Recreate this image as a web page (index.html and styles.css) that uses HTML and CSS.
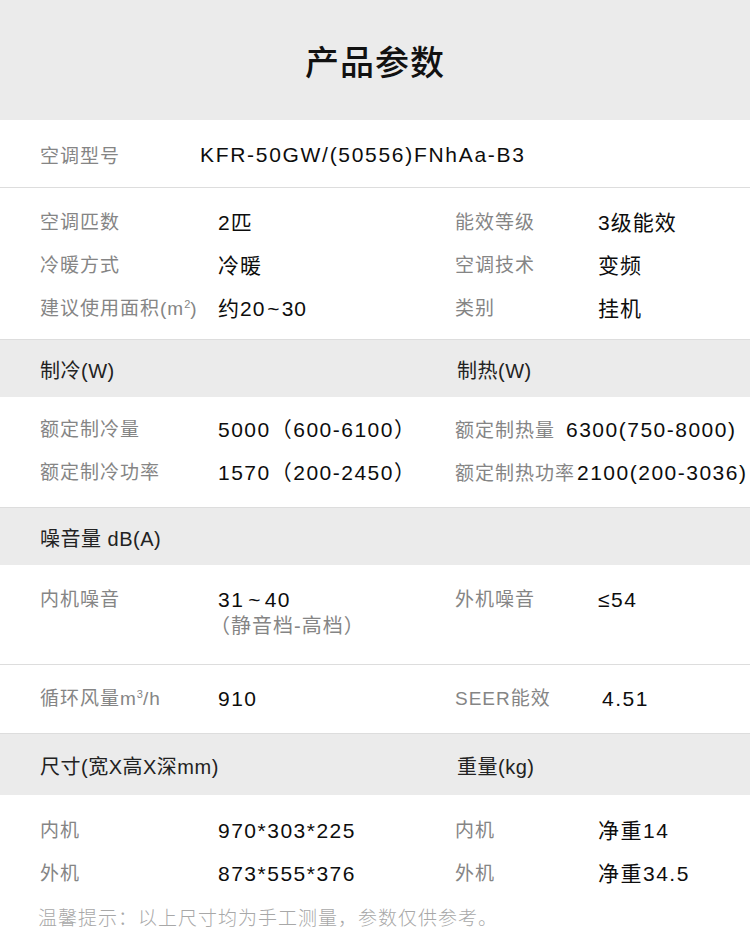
FILE: index.html
```html
<!DOCTYPE html>
<html lang="zh-CN">
<head>
<meta charset="utf-8">
<title>产品参数</title>
<link rel="stylesheet" href="styles.css">
</head>
<body>
<div class="page">
  <header class="title-bar"><h1>产品参数</h1></header>

  <section class="block model">
    <div class="row model-row">
      <span class="label">空调型号</span>
      <span class="value">KFR-50GW/(50556)FNhAa-B3</span>
    </div>
  </section>

  <section class="block basic">
    <div class="row">
      <span class="label">空调匹数</span><span class="value">2匹</span>
      <span class="label">能效等级</span><span class="value">3级能效</span>
    </div>
    <div class="row">
      <span class="label">冷暖方式</span><span class="value">冷暖</span>
      <span class="label">空调技术</span><span class="value">变频</span>
    </div>
    <div class="row">
      <span class="label">建议使用面积(m<sup>2</sup>)</span><span class="value">约20<span class="tilde">~</span>30</span>
      <span class="label">类别</span><span class="value">挂机</span>
    </div>
  </section>

  <div class="band"><span>制冷(W)</span><span>制热(W)</span></div>

  <section class="block power">
    <div class="row">
      <span class="label">额定制冷量</span><span class="value">5000（600-6100）</span>
      <span class="pair"><span class="label">额定制热量</span><span class="value gap-l">6300(750-8000)</span></span>
    </div>
    <div class="row">
      <span class="label">额定制冷功率</span><span class="value">1570（200-2450）</span>
      <span class="pair"><span class="label">额定制热功率</span><span class="value gap-s">2100(200-3036)</span></span>
    </div>
  </section>

  <div class="band"><span>噪音量 dB(A)</span></div>

  <section class="block noise">
    <div class="row">
      <span class="label">内机噪音</span>
      <span class="value">31<span class="tilde wide">~</span>40<br><span class="sub">（静音档-高档）</span></span>
      <span class="label">外机噪音</span><span class="value">≤54</span>
    </div>
  </section>

  <section class="block air">
    <div class="row">
      <span class="label">循环风量m<sup>3</sup>/h</span><span class="value">910</span>
      <span class="label">SEER能效</span><span class="value seer">4.51</span>
    </div>
  </section>

  <div class="band"><span>尺寸(宽X高X深mm)</span><span>重量(kg)</span></div>

  <section class="block size">
    <div class="row">
      <span class="label">内机</span><span class="value">970*303*225</span>
      <span class="label">内机</span><span class="value">净重14</span>
    </div>
    <div class="row">
      <span class="label">外机</span><span class="value">873*555*376</span>
      <span class="label">外机</span><span class="value">净重34.5</span>
    </div>
  </section>

  <p class="note">温馨提示：以上尺寸均为手工测量，参数仅供参考。</p>
</div>
</body>
</html>
```

FILE: styles.css
```css
* { box-sizing: border-box; }

html, body {
  margin: 0;
  padding: 0;
  background: #ffffff;
}

body {
  font-family: "Liberation Sans", "Noto Sans CJK SC", sans-serif;
  color: #111111;
}

.page {
  width: 750px;
  min-height: 946px;
  background: #ffffff;
}

.title-bar {
  height: 120px;
  background: #ebebeb;
  display: flex;
  align-items: center;
  justify-content: center;
}

.title-bar h1 {
  margin: 0;
  font-size: 34px;
  font-weight: 500;
  letter-spacing: 1px;
  color: #111111;
  font-family: "Noto Sans CJK SC", sans-serif;
}

.block {
  border-bottom: 1px solid #dddddd;
}

.row {
  display: grid;
  grid-template-columns: 178px 237px 143px 1fr;
  padding-left: 40px;
  align-items: start;
  white-space: nowrap;
}

.label {
  font-size: 19px;
  letter-spacing: 1px;
  color: #858585;
}

.label sup {
  font-size: 11px;
  vertical-align: 7px;
  line-height: 0;
  letter-spacing: 0;
}

.value {
  font-size: 21px;
  letter-spacing: 1.5px;
  color: #0d0d0d;
}

.tilde {
  letter-spacing: 0;
  margin: 0 2px;
}

.tilde.wide {
  margin: 0 4px;
}

.model .model-row {
  grid-template-columns: 160px 1fr;
  height: 67px;
  align-items: center;
  padding-top: 2px;
}

.model .value {
  font-size: 21px;
  letter-spacing: 1.7px;
}

.basic {
  padding: 13px 0 9px;
}

.basic .row {
  line-height: 43px;
}

.basic .value {
  letter-spacing: 1px;
}

.band {
  height: 57px;
  background: #ebebeb;
  display: grid;
  grid-template-columns: 417px 1fr;
  align-items: center;
  padding-left: 40px;
  padding-top: 2px;
  font-size: 20px;
  letter-spacing: 0.5px;
  color: #222222;
}

.power {
  padding: 12px 0;
}

.power .row {
  line-height: 42px;
}

.pair {
  grid-column: 3 / 5;
  display: flex;
  align-items: baseline;
}

.gap-l { margin-left: 11px; }
.gap-s { margin-left: 2px; }

.noise {
  padding: 22px 0 25px;
}

.noise .row {
  line-height: 26px;
}

.noise .sub {
  color: #858585;
  margin-left: -8px;
  font-size: 20px;
  letter-spacing: 1px;
}

.air .row {
  line-height: 68px;
}

.seer {
  margin-left: 4px;
}

.air + .band {
  height: 61px;
}

.size {
  padding: 14px 0 0;
  border-bottom: 0;
}

.size .row {
  line-height: 43px;
}

.note {
  margin: 0;
  padding: 7px 0 0 38px;
  line-height: 30px;
  font-size: 19px;
  color: #a8a8a8;
  letter-spacing: 1px;
  font-family: "Noto Sans CJK SC", sans-serif;
  font-weight: 300;
}
```
